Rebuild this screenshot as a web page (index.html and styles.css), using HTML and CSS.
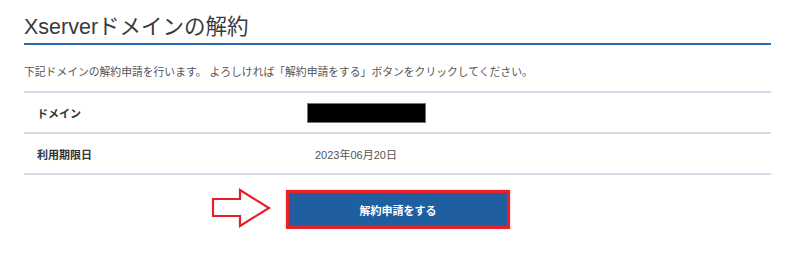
FILE: index.html
```html
<!DOCTYPE html>
<html lang="ja">
<head>
    <meta charset="UTF-8">
    <meta name="viewport" content="width=device-width, initial-scale=1.0">
    <title>Xserverドメインの解約</title>
    <link rel="stylesheet" href="styles.css">
</head>
<body>
    <div class="container">
        <h1>Xserverドメインの解約</h1>
        <p class="intro">下記ドメインの解約申請を行います。 よろしければ「解約申請をする」ボタンをクリックしてください。</p>
        <div class="info">
            <div class="row">
                <div class="label">ドメイン</div>
                <div class="value"><span class="masked"></span></div>
            </div>
            <div class="row">
                <div class="label">利用期限日</div>
                <div class="value">2023年06月20日</div>
            </div>
        </div>
        <div class="actions">
            <div class="button-wrap">
                <svg class="arrow" width="62" height="42" viewBox="0 0 62 42">
                    <polygon points="2,11 29,11 29,2 58,20 29,38 29,28 2,28" fill="#fff" stroke="#e5202a" stroke-width="2.2"/>
                </svg>
                <button class="submit">解約申請をする</button>
            </div>
        </div>
    </div>
</body>
</html>
```

FILE: styles.css
```css
body {
    margin: 0;
    background-color: #fff;
    font-family: "Liberation Sans", Arial, "Noto Sans CJK JP", sans-serif;
    color: #333;
}
.container {
    padding: 0 29px 0 24px;
}
h1 {
    margin: 0;
    padding-top: 14px;
    padding-bottom: 3px;
    font-size: 21.5px;
    line-height: 26px;
    font-weight: normal;
    color: #3a3a3a;
    border-bottom: 2px solid #2a69b3;
}
.intro {
    margin: 19px 0 11px;
    font-size: 10.8px;
    line-height: 16px;
    color: #555;
}
.info {
    border-top: 2px solid #d3dce9;
}
.row {
    display: flex;
    align-items: center;
    height: 39px;
    border-bottom: 2px solid #d3dce9;
}
.label {
    width: 278px;
    padding-left: 13px;
    font-size: 11px;
    font-weight: bold;
    color: #333;
}
.value {
    font-size: 11px;
    color: #555;
}
.masked {
    display: block;
    width: 117px;
    height: 18px;
    margin-left: -8px;
    background-color: #000;
    border: 1px solid #777;
}
.actions {
    display: flex;
    justify-content: center;
    padding-top: 15px;
}
.button-wrap {
    position: relative;
}
.arrow {
    position: absolute;
    left: -74px;
    top: -2px;
}
.submit {
    display: block;
    width: 224px;
    height: 39px;
    margin-left: 1px;
    background-color: #1f5fa0;
    border: 3px solid #e8202a;
    box-shadow: 0 0 2px rgba(232, 32, 42, 0.4);
    color: #fff;
    font-family: inherit;
    font-size: 11px;
    font-weight: bold;
    cursor: pointer;
}
```
